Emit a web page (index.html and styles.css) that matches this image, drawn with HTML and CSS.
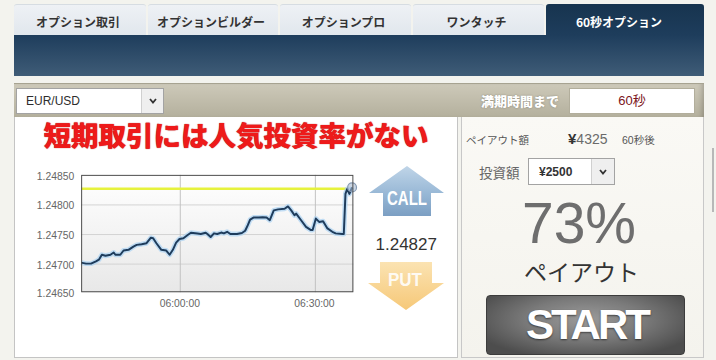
FILE: index.html
```html
<!DOCTYPE html>
<html lang="ja">
<head>
<meta charset="utf-8">
<title>60秒オプション</title>
<link rel="stylesheet" href="styles.css">
</head>
<body>
<div class="page">
  <nav class="tabs">
    <div class="tab">オプション取引</div>
    <div class="tab">オプションビルダー</div>
    <div class="tab">オプションプロ</div>
    <div class="tab">ワンタッチ</div>
    <div class="tab active">60秒オプション</div>
  </nav>
  <div class="band"></div>
  <div class="bar">
    <div class="select pair">
      <span class="sel-text">EUR/USD</span>
      <span class="sel-arrow"><svg width="8" height="6" viewBox="0 0 8 6"><polyline points="1,1 4,4.5 7,1" fill="none" stroke="#333" stroke-width="1.8"/></svg></span>
    </div>
    <div class="expiry">
      <span class="expiry-label">満期時間まで</span>
      <span class="expiry-box">60秒</span>
    </div>
  </div>
  <div class="main">
    <section class="left">
      <h1 class="headline">短期取引には人気投資率がない</h1>
      <div class="chart-row">
        <svg class="chart" width="345" height="155" viewBox="20 160 345 155">
          <defs>
            <linearGradient id="plotbg" x1="0" y1="0" x2="0" y2="1">
              <stop offset="0" stop-color="#ffffff"/>
              <stop offset="1" stop-color="#e8e8e8"/>
            </linearGradient>
          </defs>
          <rect x="82" y="174" width="276" height="119" fill="url(#plotbg)"/>
          <g stroke="#d2d2d2" stroke-width="1">
            <line x1="82" y1="204.5" x2="358" y2="204.5"/>
            <line x1="82" y1="234.5" x2="358" y2="234.5"/>
            <line x1="82" y1="264.5" x2="358" y2="264.5"/>
          </g>
          <g stroke="#c2c2c2" stroke-width="1">
            <line x1="182.5" y1="174" x2="182.5" y2="293"/>
            <line x1="319.5" y1="174" x2="319.5" y2="293"/>
          </g>
          <line x1="82" y1="188" x2="352" y2="188" stroke="#e6f23c" stroke-width="2.5"/>
          <path d="M82,263 L87,264 L92,264 L97,261.7 L100,260 L103,255 L106.7,256 L111.7,255 L115,252.7 L116.7,255 L121.7,255 L125,250.7 L130,250 L135,246.7 L138.3,245 L143.3,244.3 L148.3,243.3 L152.7,237.7 L155,238.3 L158.3,243.3 L163.3,250 L168.3,250.7 L171.7,255 L175,250 L178.3,242.7 L181.7,239 L185.7,238.3 L190,235 L193.3,232.7 L200,233.5 L203.3,234 L208.3,232.7 L210,234 L213.3,237 L216.7,233.3 L220,234 L224,232.5 L226.7,233.3 L230,231.7 L233.3,234 L240,234 L245,233 L248.3,230.7 L251,225 L253.3,219.3 L256.7,217.3 L262,217.3 L266,217 L270,217.3 L273.3,220 L277.3,210 L281.7,209 L288.3,208.3 L291.7,206 L295,210 L298.3,215 L300,213.3 L305,220 L310,226.7 L315,230 L316.7,230 L320,218.3 L323.3,221.7 L327.3,221 L331.7,228.3 L336.7,231.7 L340,233.3 L346.7,234 L348.3,234 L350,193.3 L351.7,188.3 L354,193.3 L356.7,186.7" fill="none" stroke="#a9d2f2" stroke-width="5" stroke-linejoin="round" opacity="0.7"/>
          <path d="M82,263 L87,264 L92,264 L97,261.7 L100,260 L103,255 L106.7,256 L111.7,255 L115,252.7 L116.7,255 L121.7,255 L125,250.7 L130,250 L135,246.7 L138.3,245 L143.3,244.3 L148.3,243.3 L152.7,237.7 L155,238.3 L158.3,243.3 L163.3,250 L168.3,250.7 L171.7,255 L175,250 L178.3,242.7 L181.7,239 L185.7,238.3 L190,235 L193.3,232.7 L200,233.5 L203.3,234 L208.3,232.7 L210,234 L213.3,237 L216.7,233.3 L220,234 L224,232.5 L226.7,233.3 L230,231.7 L233.3,234 L240,234 L245,233 L248.3,230.7 L251,225 L253.3,219.3 L256.7,217.3 L262,217.3 L266,217 L270,217.3 L273.3,220 L277.3,210 L281.7,209 L288.3,208.3 L291.7,206 L295,210 L298.3,215 L300,213.3 L305,220 L310,226.7 L315,230 L316.7,230 L320,218.3 L323.3,221.7 L327.3,221 L331.7,228.3 L336.7,231.7 L340,233.3 L346.7,234 L348.3,234 L350,193.3 L351.7,188.3 L354,193.3 L356.7,186.7" fill="none" stroke="#1e3c5c" stroke-width="2" stroke-linejoin="round"/>
          <circle cx="356.7" cy="186.7" r="4.5" fill="rgba(160,180,205,0.55)" stroke="#8499b3" stroke-width="1.2"/>
          <rect x="82.5" y="174.5" width="275" height="118" fill="none" stroke="#4a4a4a" stroke-width="1"/>
          <g font-family="Liberation Sans, sans-serif" font-size="10.5" fill="#666" text-anchor="end">
            <text x="75" y="179">1.24850</text>
            <text x="75" y="209">1.24800</text>
            <text x="75" y="239">1.24750</text>
            <text x="75" y="269">1.24700</text>
            <text x="75" y="298">1.24650</text>
          </g>
          <g font-family="Liberation Sans, sans-serif" font-size="10.5" fill="#666" text-anchor="middle">
            <text x="182" y="308">06:00:00</text>
            <text x="318.5" y="308">06:30:00</text>
          </g>
        </svg>
        <div class="trade">
          <svg class="call" width="80" height="52" viewBox="0 0 80 52">
            <defs>
              <linearGradient id="callg" x1="0" y1="0" x2="0" y2="1">
                <stop offset="0" stop-color="#c0d5e8"/>
                <stop offset="0.55" stop-color="#98b8d6"/>
                <stop offset="1" stop-color="#7c9fc3"/>
              </linearGradient>
            </defs>
            <path d="M41 1 L78 28 L65 28 L65 51 L17 51 L17 28 L3 28 Z" fill="url(#callg)"/>
            <text x="41" y="39.5" text-anchor="middle" font-family="Liberation Sans, sans-serif" font-size="21" font-weight="bold" fill="#ffffff" textLength="40" lengthAdjust="spacingAndGlyphs">CALL</text>
          </svg>
          <div class="price">1.24827</div>
          <svg class="put" width="80" height="54" viewBox="0 0 80 54">
            <defs>
              <linearGradient id="putg" x1="0" y1="0" x2="0" y2="1">
                <stop offset="0" stop-color="#fbe3b2"/>
                <stop offset="1" stop-color="#f6c878"/>
              </linearGradient>
            </defs>
            <path d="M14 4 L66 4 L66 25 L78 25 L40 52 L2 25 L14 25 Z" fill="url(#putg)"/>
            <text x="39" y="28" text-anchor="middle" font-family="Liberation Sans, sans-serif" font-size="19" font-weight="bold" fill="#ffffff" fill-opacity="0.9" textLength="34" lengthAdjust="spacingAndGlyphs">PUT</text>
          </svg>
        </div>
      </div>
    </section>
    <section class="right">
      <div class="pay-row">
        <span class="pay-label">ペイアウト額</span>
        <span class="pay-amt"><span class="yen">¥</span>4325</span>
        <span class="pay-when">60秒後</span>
      </div>
      <div class="inv-row">
        <span class="inv-label">投資額</span>
        <div class="select inv">
          <span class="sel-text">¥2500</span>
          <span class="sel-arrow"><svg width="8" height="6" viewBox="0 0 8 6"><polyline points="1,1 4,4.5 7,1" fill="none" stroke="#333" stroke-width="1.8"/></svg></span>
        </div>
      </div>
      <div class="rate">73%</div>
      <div class="payout">ペイアウト</div>
      <div class="start">START</div>
    </section>
  </div>
</div>
<div class="scroll-thumb"></div>
</body>
</html>
```
FILE: styles.css
```css
html, body {
  margin: 0;
  padding: 0;
}
body {
  background: #f3f3ee;
  font-family: "Liberation Sans", "Noto Sans CJK JP", sans-serif;
  color: #333;
  width: 716px;
  height: 360px;
  overflow: hidden;
  position: relative;
}
.page {
  width: 690px;
  margin-left: 14px;
  padding-top: 4px;
}

/* tabs */
.tabs {
  display: flex;
  gap: 2px;
  height: 31px;
}
.tab {
  box-sizing: border-box;
  height: 31px;
  padding: 2px 4px 0 0;
  line-height: 29px;
  text-align: center;
  font-family: "Noto Sans CJK JP", sans-serif;
  font-weight: bold;
  font-size: 12px;
  color: #333;
  background: linear-gradient(#eef1f5, #e1e7ed);
  border-top: 1px solid #d6dce2;
  border-radius: 3px 3px 0 0;
}
.tab:nth-child(1) { width: 132px; }
.tab:nth-child(2) { width: 130px; }
.tab:nth-child(3) { width: 131px; }
.tab:nth-child(4) { width: 131px; }
.tab.active {
  width: 158px;
  padding-right: 12px;
  color: #fff;
  background: linear-gradient(#17344f, #1e3d5c);
  border-top-color: #17344f;
}

.band {
  height: 41px;
  background: linear-gradient(#1e3d5c, #3f5c77);
}

/* selector bar */
.bar {
  box-sizing: border-box;
  margin-top: 7px;
  height: 34px;
  display: flex;
  align-items: center;
  padding: 0 9px 0 2px;
  background: linear-gradient(#cdc9b9, #b4b09d);
  border-top: 1px solid #a7a391;
  box-shadow: inset -5px 0 5px -3px rgba(0, 0, 0, 0.2);
}
.select {
  box-sizing: border-box;
  display: flex;
  background: #fff;
  border: 1px solid #a3a3a3;
}
.select.pair {
  width: 148px;
  height: 26px;
}
.sel-text {
  flex: 1;
  display: flex;
  align-items: center;
  padding-left: 9px;
  font-size: 12px;
  color: #2d2d2d;
}
.sel-arrow {
  width: 21px;
  display: flex;
  align-items: center;
  justify-content: center;
  background: #efefef;
  border-left: 1px solid #d0d0d0;
}
.expiry {
  margin-left: auto;
  display: flex;
  align-items: center;
}
.expiry-label {
  font-family: "Noto Sans CJK JP", sans-serif;
  font-weight: 900;
  font-size: 13px;
  color: #ffffff;
  text-shadow: 0 0 2px rgba(0, 0, 0, 0.3);
  margin-right: 10px;
}
.expiry-box {
  box-sizing: border-box;
  width: 126px;
  height: 26px;
  line-height: 24px;
  background: #fff;
  border: 1px solid #b2ae9c;
  text-align: center;
  font-size: 13px;
  color: #7b1420;
}

/* main */
.main {
  display: flex;
  gap: 3px;
  height: 241px;
}
.left {
  box-sizing: border-box;
  width: 444px;
  height: 241px;
  background: #fff;
  border: 1px solid #c4c4c4;
  border-top: 0;
}
.headline {
  margin: 0;
  height: 43px;
  line-height: 35px;
  text-align: center;
  font-family: "Noto Sans CJK JP", sans-serif;
  font-weight: 900;
  font-size: 27.5px;
  color: #ee1a1a;
  text-shadow: 0 0 1px #a00000;
}
.chart-row {
  display: flex;
  padding-left: 5px;
}
.chart {
  display: block;
}
.trade {
  width: 92px;
  display: flex;
  flex-direction: column;
  align-items: flex-start;
  padding-left: 6px;
}
.call {
  display: block;
  margin-top: 5px;
}
.price {
  width: 80px;
  margin-top: 18px;
  line-height: 20px;
  text-align: center;
  font-size: 17px;
  color: #333;
}
.put {
  display: block;
  margin-top: 3px;
}

.right {
  box-sizing: border-box;
  width: 243px;
  height: 241px;
  background: linear-gradient(#faf9f5, #f4f3ed);
  border: 1px solid #c8c8c8;
  border-top: 0;
}
.pay-row {
  display: flex;
  align-items: baseline;
  padding: 14px 0 0 4px;
  line-height: 16px;
}
.pay-label {
  width: 102px;
  font-size: 10.5px;
  color: #555;
}
.pay-amt {
  width: 54px;
  font-size: 14px;
  color: #6a6a6a;
}
.yen {
  font-weight: bold;
  font-size: 15px;
  color: #333;
}
.pay-when {
  font-size: 10.5px;
  color: #555;
}
.inv-row {
  display: flex;
  align-items: center;
  margin-top: 10px;
  padding-left: 17px;
}
.inv-label {
  width: 49px;
  font-size: 13.5px;
  color: #666;
}
.select.inv {
  width: 87px;
  height: 27px;
}
.select.inv .sel-text {
  padding-left: 10px;
  font-weight: bold;
  color: #333;
}
.select.inv .sel-arrow {
  width: 22px;
}
.rate {
  margin-top: 10px;
  padding-right: 7px;
  font-size: 57px;
  line-height: 57px;
  text-align: center;
  color: #6e6e6e;
}
.payout {
  margin-top: 5px;
  padding-right: 2px;
  font-family: "Noto Sans CJK JP", sans-serif;
  font-size: 23px;
  line-height: 28px;
  text-align: center;
  color: #333;
}
.start {
  box-sizing: border-box;
  margin: 10px 0 0 24px;
  width: 199px;
  height: 60px;
  padding-left: 3px;
  border: 1px solid #3c3c3c;
  border-radius: 4px;
  background: radial-gradient(ellipse 60% 70% at 50% 40%, #9b9b9b 0%, #7a7a7a 50%, #4d4d4d 100%);
  color: #fff;
  font-weight: bold;
  font-size: 42px;
  letter-spacing: -3px;
  line-height: 58px;
  text-align: center;
  text-shadow: 0 1px 2px rgba(0, 0, 0, 0.55);
}

.scroll-thumb {
  position: absolute;
  left: 712px;
  top: 148px;
  width: 2px;
  height: 64px;
  background: #b8b8b8;
}
```
